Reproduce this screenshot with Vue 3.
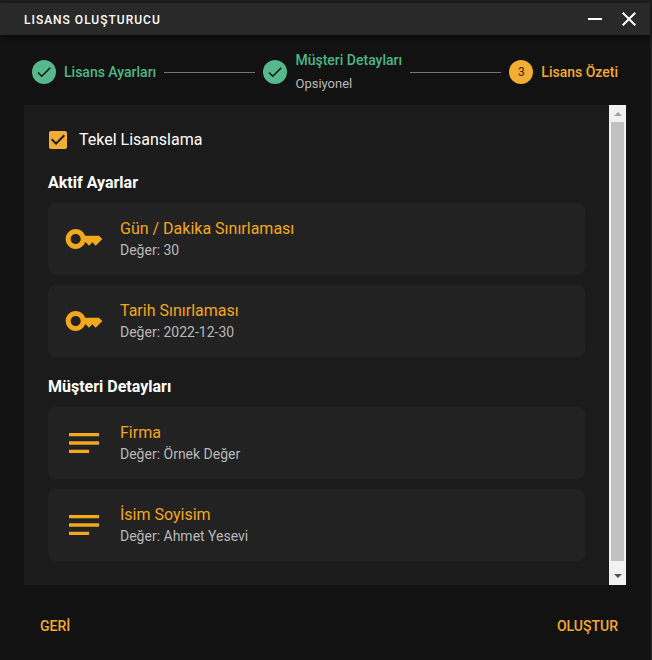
<script setup>
import { ref } from 'vue'

const exclusive = ref(true)

const steps = [
  { label: 'Lisans Ayarları', state: 'done' },
  { label: 'Müşteri Detayları', note: 'Opsiyonel', state: 'done' },
  { label: 'Lisans Özeti', state: 'active' },
]

const keyIcon =
  'M21 10h-8.35C11.83 7.67 9.61 6 7 6c-3.31 0-6 2.69-6 6s2.69 6 6 6c2.61 0 4.83-1.67 5.65-4H13l2 2 2-2 2 2 4-4.04L21 10zM7 15c-1.65 0-3-1.35-3-3s1.35-3 3-3 3 1.35 3 3-1.35 3-3 3z'
const notesIcon = 'M3 18h12v-2H3v2zM3 6v2h18V6H3zm0 7h18v-2H3v2z'

const groups = [
  {
    title: 'Aktif Ayarlar',
    icon: keyIcon,
    items: [
      { name: 'Gün / Dakika Sınırlaması', value: '30' },
      { name: 'Tarih Sınırlaması', value: '2022-12-30' },
    ],
  },
  {
    title: 'Müşteri Detayları',
    icon: notesIcon,
    items: [
      { name: 'Firma', value: 'Örnek Değer' },
      { name: 'İsim Soyisim', value: 'Ahmet Yesevi' },
    ],
  },
]
</script>

<template>
  <div class="window" lang="tr">
    <header class="titlebar">
      <h1>LISANS OLUŞTURUCU</h1>
      <div class="controls">
        <button type="button" aria-label="Küçült">
          <svg viewBox="0 0 24 24"><path d="M5 11h14v2H5z" /></svg>
        </button>
        <button type="button" aria-label="Kapat">
          <svg viewBox="0 0 24 24">
            <path d="M19 6.41 17.59 5 12 10.59 6.41 5 5 6.41 10.59 12 5 17.59 6.41 19 12 13.41 17.59 19 19 17.59 13.41 12z" />
          </svg>
        </button>
      </div>
    </header>

    <ol class="stepper">
      <template v-for="(step, i) in steps" :key="step.label">
        <li v-if="i" class="connector" aria-hidden="true"></li>
        <li class="step" :class="step.state">
          <span class="badge">
            <svg v-if="step.state === 'done'" viewBox="0 0 24 24">
              <path d="M9 16.17 4.83 12l-1.42 1.41L9 19 21 7l-1.41-1.41z" />
            </svg>
            <template v-else>{{ i + 1 }}</template>
          </span>
          <span class="labels">
            <span class="label">{{ step.label }}</span>
            <span v-if="step.note" class="note">{{ step.note }}</span>
          </span>
        </li>
      </template>
    </ol>

    <main class="panel">
      <div class="content">
        <label class="check">
          <input v-model="exclusive" type="checkbox" />
          <svg class="box" viewBox="0 0 24 24" aria-hidden="true">
            <path
              v-if="exclusive"
              d="M19 3H5c-1.11 0-2 .9-2 2v14c0 1.1.89 2 2 2h14c1.11 0 2-.9 2-2V5c0-1.1-.89-2-2-2zm-9 14l-5-5 1.41-1.41L10 14.17l7.59-7.59L19 8l-9 9z"
            />
            <path v-else d="M19 5v14H5V5h14m0-2H5c-1.1 0-2 .9-2 2v14c0 1.1.9 2 2 2h14c1.1 0 2-.9 2-2V5c0-1.1-.9-2-2-2z" />
          </svg>
          <span>Tekel Lisanslama</span>
        </label>

        <section v-for="group in groups" :key="group.title">
          <h2>{{ group.title }}</h2>
          <ul class="cards">
            <li v-for="item in group.items" :key="item.name" class="card">
              <svg viewBox="0 0 24 24" aria-hidden="true"><path :d="group.icon" /></svg>
              <div>
                <h3>{{ item.name }}</h3>
                <p>Değer: {{ item.value }}</p>
              </div>
            </li>
          </ul>
        </section>
      </div>
      <div class="scrollbar" aria-hidden="true">
        <span class="arrow up"></span>
        <span class="thumb"></span>
        <span class="arrow down"></span>
      </div>
    </main>

    <footer class="actions">
      <button type="button">GERİ</button>
      <button type="button">OLUŞTUR</button>
    </footer>
  </div>
</template>

<style>
body {
  margin: 0;
  background: #121212;
}
</style>

<style scoped>
.window {
  box-sizing: border-box;
  min-height: 100vh;
  display: flex;
  flex-direction: column;
  border: solid #1f1f1f;
  border-width: 3px 2px 1px 0;
  background: #121212;
  color: #fff;
  font-family: Roboto, "Liberation Sans", sans-serif;
  font-size: 16px;
  line-height: 24px;
}

h1,
h2,
h3,
p,
ol,
ul {
  margin: 0;
  padding: 0;
  list-style: none;
}

button {
  border: 0;
  padding: 0;
  background: none;
  color: inherit;
  font: inherit;
  cursor: pointer;
}

svg {
  display: block;
  fill: currentColor;
  flex: none;
}

.titlebar {
  display: flex;
  align-items: center;
  justify-content: space-between;
  height: 32px;
  padding: 0 9px 0 24px;
  background: #292929;
  box-shadow: 0 2px 6px rgba(0, 0, 0, 0.5);
}

.titlebar h1 {
  padding-top: 2px;
  font-size: 12px;
  font-weight: 500;
  letter-spacing: 1px;
}

.controls {
  display: flex;
  gap: 10px;
}

.controls svg {
  width: 24px;
  height: 24px;
}

.stepper {
  display: flex;
  align-items: center;
  height: 70px;
  padding: 4px 24px 0;
  box-sizing: border-box;
}

.step {
  display: flex;
  align-items: center;
  gap: 8px;
  padding: 0 8px;
  color: #4db886;
}

.step.active {
  color: #f5ac2c;
}

.connector {
  flex: 1;
  border-top: 1px solid #757575;
}

.badge {
  display: grid;
  place-items: center;
  width: 24px;
  height: 24px;
  border-radius: 50%;
  background: #56b88c;
  color: #121212;
  font-size: 12px;
}

.badge svg {
  width: 18px;
  height: 18px;
}

.active .badge {
  background: #f2ad33;
  color: #33260d;
}

.labels {
  display: grid;
  font-size: 14px;
  font-weight: 500;
}

.note {
  color: #b8b8b8;
  font-size: 13px;
  font-weight: 400;
}

.panel {
  display: flex;
  margin: 0 24px;
  background: #1b1b1b;
}

.content {
  flex: 1;
  min-width: 0;
  padding: 14px 24px 24px;
}

.check {
  display: flex;
  align-items: center;
  gap: 9px;
  height: 42px;
  margin-left: -2px;
  cursor: pointer;
}

.check input {
  position: absolute;
  width: 24px;
  height: 24px;
  margin: 0;
  opacity: 0;
}

.box {
  width: 24px;
  height: 24px;
  color: #f2ad33;
}

h2 {
  padding: 10px 0 8px;
  font-size: 16px;
  font-weight: 700;
}

section + section {
  padding-top: 8px;
}

.cards {
  display: grid;
  gap: 10px;
}

.card {
  display: flex;
  align-items: center;
  gap: 16px;
  padding: 14px 16px;
  border-radius: 8px;
  background: #222;
}

.card svg {
  width: 40px;
  height: 40px;
  color: #f2a81d;
}

.card h3 {
  color: #f2a81d;
  font-size: 16px;
  font-weight: 400;
}

.card p {
  padding-bottom: 2px;
  color: #b8b8b8;
  font-size: 14px;
  line-height: 18px;
}

.scrollbar {
  display: flex;
  flex-direction: column;
  align-items: center;
  width: 17px;
  background: #f1f1f1;
}

.thumb {
  flex: 1;
  width: 13px;
  background: #c1c1c1;
}

.arrow {
  box-sizing: border-box;
  display: grid;
  place-items: center;
  height: 17px;
}

.down {
  height: 24px;
  padding-top: 6px;
}

.arrow::before {
  content: "";
  border: solid transparent;
  border-width: 0 4px 4px;
  border-bottom-color: #a3a3a3;
}

.down::before {
  border-width: 4px 4px 0;
  border-top-color: #505050;
}

.actions {
  display: flex;
  justify-content: space-between;
  padding: 29px 32px;
  color: #f5ac2c;
  font-size: 14px;
  font-weight: 500;
}

.actions button {
  padding: 0 8px;
}

.actions button:last-child {
  padding-right: 0;
}
</style>
